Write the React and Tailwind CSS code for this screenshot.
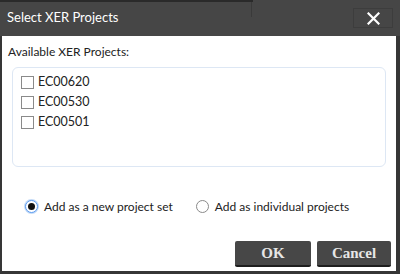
import React from "react";

const font = { fontFamily: 'Lato, "Noto Sans", sans-serif' };

function Check({ label }) {
  return (
    <div className="flex items-center h-[20px]">
      <div className="w-[13px] h-[13px] border border-[#8a8a8a] bg-white" />
      <span className="ml-[4px] text-[12.5px] text-[#222] leading-none">{label}</span>
    </div>
  );
}

function Radio({ checked, label }) {
  return (
    <div className="flex items-center">
      {checked ? (
        <div className="w-[13px] h-[13px] rounded-full border border-[#5b9bf0] bg-white flex items-center justify-center shadow-[0_0_0_1px_#c5dbf7]">
          <div className="w-[7px] h-[7px] rounded-full bg-[#111]" />
        </div>
      ) : (
        <div className="w-[13px] h-[13px] rounded-full border border-[#8a8a8a] bg-white" />
      )}
      <span className="ml-[6px] text-[12px] text-[#222] leading-none">{label}</span>
    </div>
  );
}

function Btn({ children, w }) {
  return (
    <div
      className={`${w} h-[26px] rounded-[2px] bg-[#474747] border-b-[2px] border-[#1e1e1e] flex items-center justify-center text-[#e6e6e6] font-bold text-[15px]`}
      style={{ fontFamily: '"Liberation Serif", serif' }}
    >
      {children}
    </div>
  );
}

export default function App() {
  return (
    <div className="w-[400px] h-[274px] bg-[#363636] flex flex-col" style={font}>
      <div className="h-[36px] bg-[#464646] flex flex-col relative">
        <div className="flex h-[2px]">
          <div className="w-[253px] bg-[#2a2a2a]" />
          <div className="flex-1" />
        </div>
        <div className="absolute left-[251px] top-[2px] w-[1px] h-[15px] bg-[#3a3a3a]" />
        <div className="flex-1 flex items-center justify-between pl-[7px] pr-[7px]">
          <span className="text-white text-[13px] leading-none -mt-[3px]">Select XER Projects</span>
          <div className="w-[40px] h-[20px] border border-[#3d3d3d] flex items-center justify-center -mt-[2px]">
            <svg width="13" height="13" viewBox="0 0 13 13">
              <path d="M1.5 1.5 L11.5 11.5 M11.5 1.5 L1.5 11.5" stroke="#fff" strokeWidth="2.2" strokeLinecap="square" />
            </svg>
          </div>
        </div>
      </div>
      <div className="flex-1 bg-white ml-[2px] mr-[4px] mb-[3px] flex flex-col">
        <div className="pl-[6px] pt-[10px] text-[12px] text-[#222] leading-none">Available XER Projects:</div>
        <div className="mx-[10px] mt-[9px] h-[100px] rounded-[6px] border border-[#dde7f4] pl-[8px] pt-[4px] flex flex-col">
          <Check label="EC00620" />
          <Check label="EC00530" />
          <Check label="EC00501" />
        </div>
        <div className="flex items-center mt-[33px] pl-[23px] gap-[23px]">
          <Radio checked label="Add as a new project set" />
          <Radio label="Add as individual projects" />
        </div>
        <div className="flex justify-end gap-[6px] mt-[28px] pr-[5px]">
          <Btn w="w-[76px]">OK</Btn>
          <Btn w="w-[74px]">Cancel</Btn>
        </div>
      </div>
    </div>
  );
}
